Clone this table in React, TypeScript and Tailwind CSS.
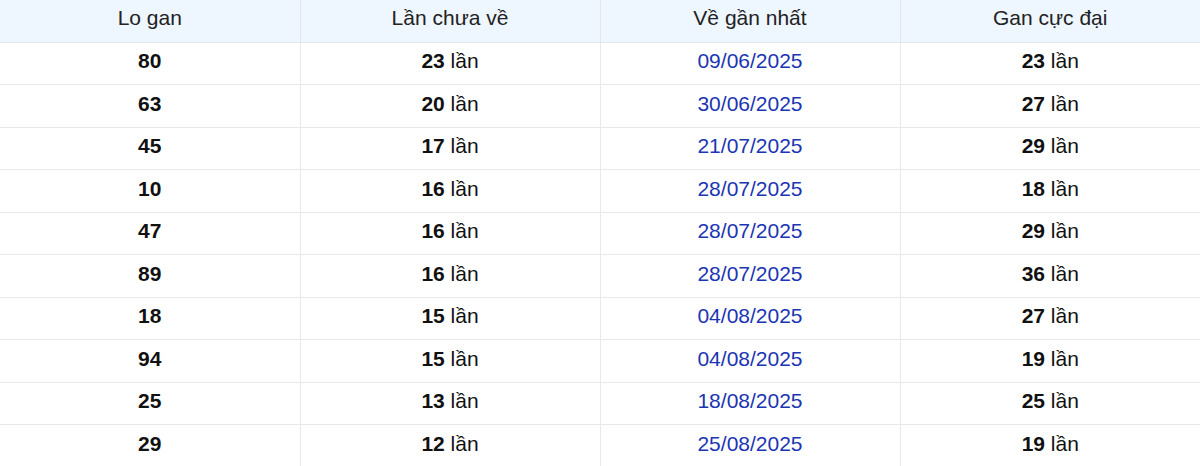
const rows = [
    ["80", "23", "09/06/2025", "23"],
    ["63", "20", "30/06/2025", "27"],
    ["45", "17", "21/07/2025", "29"],
    ["10", "16", "28/07/2025", "18"],
    ["47", "16", "28/07/2025", "29"],
    ["89", "16", "28/07/2025", "36"],
    ["18", "15", "04/08/2025", "27"],
    ["94", "15", "04/08/2025", "19"],
    ["25", "13", "18/08/2025", "25"],
    ["29", "12", "25/08/2025", "19"],
];

export default function App() {
    return (
        <div className="w-[1200px] bg-white font-['Liberation_Sans',Arial,sans-serif] text-[21px] text-[#111]">
            <table className="w-full table-fixed border-collapse">
                <thead>
                    <tr className="h-[42px] bg-[#eef6ff]">
                        {["Lo gan", "Lần chưa về", "Về gần nhất", "Gan cực đại"].map((h, i) => (
                            <th
                                key={h}
                                className={`pb-[6px] font-normal text-[#222] border-b border-[#e3e6ea] ${i < 3 ? "border-r" : ""}`}
                            >
                                {h}
                            </th>
                        ))}
                    </tr>
                </thead>
                <tbody>
                    {rows.map((r, idx) => (
                        <tr key={idx} className="h-[42.5px]">
                            <td className="pb-[5px] text-center font-bold border-r border-b border-[#e8e8e8]">{r[0]}</td>
                            <td className="pb-[5px] text-center border-r border-b border-[#e8e8e8]">
                                <b>{r[1]}</b> lần
                            </td>
                            <td className="pb-[5px] text-center text-[#1b35b3] border-r border-b border-[#e8e8e8]">{r[2]}</td>
                            <td className="pb-[5px] text-center border-b border-[#e8e8e8]">
                                <b>{r[3]}</b> lần
                            </td>
                        </tr>
                    ))}
                </tbody>
            </table>
        </div>
    );
}
